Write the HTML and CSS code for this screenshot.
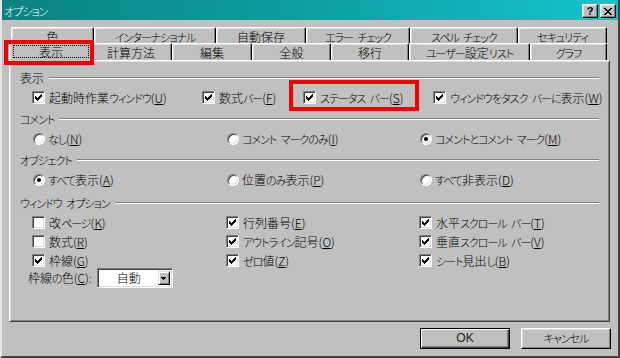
FILE: index.html
```html
<!DOCTYPE html>
<html lang="ja">
<head>
<meta charset="utf-8">
<title>オプション</title>
<link rel="stylesheet" href="styles.css">
</head>
<body>
<div class="window">
  <div class="titlebar">
    <span class="title"><span class="k">オプション</span></span>
    <div class="tb-buttons">
      <span class="tb-btn help">?</span>
      <span class="tb-btn close"><svg width="8" height="7" viewBox="0 0 8 7" shape-rendering="crispEdges"><path d="M0 0h2v1h1v1h2v-1h1v-1h2v1h-1v1h-1v1h-1v1h1v1h1v1h1v1h-2v-1h-1v-1h-2v1h-1v1h-2v-1h1v-1h1v-1h1v-1h-1v-1h-1v-1h-1z" fill="#000"/></svg></span>
    </div>
  </div>
  <div class="client">
    <div class="tabs">
      <div class="tabrow back">
        <div class="tab w83">色</div>
        <div class="tab w122"><span class="k">インターナショナル</span></div>
        <div class="tab w90">自動保存</div>
        <div class="tab w104"><span class="k">エラー チェック</span></div>
        <div class="tab w108"><span class="k">スペル チェック</span></div>
        <div class="tab w89"><span class="k">セキュリティ</span></div>
      </div>
      <div class="tabrow front">
        <div class="tab selected w79"><span class="focus">表示</span><span class="mark mark-tab"></span></div>
        <div class="tab w82">計算方法</div>
        <div class="tab w80">編集</div>
        <div class="tab w79">全般</div>
        <div class="tab w78">移行</div>
        <div class="tab w121"><span class="k">ユーザー</span>設定<span class="k">リスト</span></div>
        <div class="tab w77"><span class="k">グラフ</span></div>
      </div>
    </div>

    <div class="panel">
      <div class="group">
        <div class="ghead"><span class="glabel">表示</span><span class="gline"></span></div>
        <div class="grid grid-show">
          <label class="item"><span class="cb"><svg class="ck" width="7" height="7" viewBox="0 0 7 7" shape-rendering="crispEdges"><path d="M6 0h1v3h-1v1h-1v1h-1v1h-1v1h-1v-1h-1v-1h-1v-3h1v1h1v1h1v-1h1v-1h1v-1h1z" fill="#000"/></svg></span><span class="txt">起動時作業<span class="k">ウィンドウ</span>(<u>U</u>)</span></label>
          <label class="item"><span class="cb"><svg class="ck" width="7" height="7" viewBox="0 0 7 7" shape-rendering="crispEdges"><path d="M6 0h1v3h-1v1h-1v1h-1v1h-1v1h-1v-1h-1v-1h-1v-3h1v1h1v1h1v-1h1v-1h1v-1h1z" fill="#000"/></svg></span><span class="txt">数式<span class="k">バー</span>(<u>F</u>)</span></label>
          <label class="item"><span class="cb"><svg class="ck" width="7" height="7" viewBox="0 0 7 7" shape-rendering="crispEdges"><path d="M6 0h1v3h-1v1h-1v1h-1v1h-1v1h-1v-1h-1v-1h-1v-3h1v1h1v1h1v-1h1v-1h1v-1h1z" fill="#000"/></svg></span><span class="txt"><span class="k">ステータス バー</span>(<u>S</u>)</span><span class="mark mark-status"></span></label>
          <label class="item"><span class="cb"><svg class="ck" width="7" height="7" viewBox="0 0 7 7" shape-rendering="crispEdges"><path d="M6 0h1v3h-1v1h-1v1h-1v1h-1v1h-1v-1h-1v-1h-1v-3h1v1h1v1h1v-1h1v-1h1v-1h1z" fill="#000"/></svg></span><span class="txt"><span class="k">ウィンドウをタスク バーに</span>表示(<u>W</u>)</span></label>
        </div>
      </div>

      <div class="group">
        <div class="ghead"><span class="glabel"><span class="k">コメント</span></span><span class="gline"></span></div>
        <div class="grid grid-three">
          <label class="item"><span class="rb"></span><span class="txt"><span class="k">なし</span>(<u>N</u>)</span></label>
          <label class="item"><span class="rb"></span><span class="txt"><span class="k">コメント マークのみ</span>(<u>I</u>)</span></label>
          <label class="item"><span class="rb on"></span><span class="txt"><span class="k">コメントとコメント マーク</span>(<u>M</u>)</span></label>
        </div>
      </div>

      <div class="group">
        <div class="ghead"><span class="glabel"><span class="k">オブジェクト</span></span><span class="gline"></span></div>
        <div class="grid grid-three">
          <label class="item"><span class="rb on"></span><span class="txt"><span class="k">すべて</span>表示(<u>A</u>)</span></label>
          <label class="item"><span class="rb"></span><span class="txt">位置<span class="k">のみ</span>表示(<u>P</u>)</span></label>
          <label class="item"><span class="rb"></span><span class="txt"><span class="k">すべて</span>非表示(<u>D</u>)</span></label>
        </div>
      </div>

      <div class="group group-last">
        <div class="ghead"><span class="glabel"><span class="k">ウィンドウ オプション</span></span><span class="gline"></span></div>
        <div class="grid grid-three grid-opts">
          <label class="item"><span class="cb"></span><span class="txt">改<span class="k">ページ</span>(<u>K</u>)</span></label>
          <label class="item"><span class="cb"><svg class="ck" width="7" height="7" viewBox="0 0 7 7" shape-rendering="crispEdges"><path d="M6 0h1v3h-1v1h-1v1h-1v1h-1v1h-1v-1h-1v-1h-1v-3h1v1h1v1h1v-1h1v-1h1v-1h1z" fill="#000"/></svg></span><span class="txt">行列番号(<u>E</u>)</span></label>
          <label class="item"><span class="cb"><svg class="ck" width="7" height="7" viewBox="0 0 7 7" shape-rendering="crispEdges"><path d="M6 0h1v3h-1v1h-1v1h-1v1h-1v1h-1v-1h-1v-1h-1v-3h1v1h1v1h1v-1h1v-1h1v-1h1z" fill="#000"/></svg></span><span class="txt">水平<span class="k">スクロール バー</span>(<u>T</u>)</span></label>

          <label class="item"><span class="cb"></span><span class="txt">数式(<u>R</u>)</span></label>
          <label class="item"><span class="cb"><svg class="ck" width="7" height="7" viewBox="0 0 7 7" shape-rendering="crispEdges"><path d="M6 0h1v3h-1v1h-1v1h-1v1h-1v1h-1v-1h-1v-1h-1v-3h1v1h1v1h1v-1h1v-1h1v-1h1z" fill="#000"/></svg></span><span class="txt"><span class="k">アウトライン</span>記号(<u>O</u>)</span></label>
          <label class="item"><span class="cb"><svg class="ck" width="7" height="7" viewBox="0 0 7 7" shape-rendering="crispEdges"><path d="M6 0h1v3h-1v1h-1v1h-1v1h-1v1h-1v-1h-1v-1h-1v-3h1v1h1v1h1v-1h1v-1h1v-1h1z" fill="#000"/></svg></span><span class="txt">垂直<span class="k">スクロール バー</span>(<u>V</u>)</span></label>

          <label class="item"><span class="cb"><svg class="ck" width="7" height="7" viewBox="0 0 7 7" shape-rendering="crispEdges"><path d="M6 0h1v3h-1v1h-1v1h-1v1h-1v1h-1v-1h-1v-1h-1v-3h1v1h1v1h1v-1h1v-1h1v-1h1z" fill="#000"/></svg></span><span class="txt">枠線(<u>G</u>)</span></label>
          <label class="item"><span class="cb"><svg class="ck" width="7" height="7" viewBox="0 0 7 7" shape-rendering="crispEdges"><path d="M6 0h1v3h-1v1h-1v1h-1v1h-1v1h-1v-1h-1v-1h-1v-3h1v1h1v1h1v-1h1v-1h1v-1h1z" fill="#000"/></svg></span><span class="txt"><span class="k">ゼロ</span>値(<u>Z</u>)</span></label>
          <label class="item"><span class="cb"><svg class="ck" width="7" height="7" viewBox="0 0 7 7" shape-rendering="crispEdges"><path d="M6 0h1v3h-1v1h-1v1h-1v1h-1v1h-1v-1h-1v-1h-1v-3h1v1h1v1h1v-1h1v-1h1v-1h1z" fill="#000"/></svg></span><span class="txt"><span class="k">シート</span>見出<span class="k">し</span>(<u>B</u>)</span></label>
        </div>
        <div class="colorrow">
          <span class="txt">枠線<span class="k">の</span>色(<u>C</u>):</span>
          <span class="combo"><span class="combo-val">自動</span><span class="combo-btn"><svg width="5" height="3" viewBox="0 0 5 3" shape-rendering="crispEdges"><path d="M0 0h5v1h-1v1h-1v1h-1v-1h-1v-1h-1z" fill="#000"/></svg></span></span>
        </div>
      </div>
    </div>

    <div class="buttons">
      <span class="btn default">OK</span>
      <span class="btn"><span class="k">キャンセル</span></span>
    </div>
  </div>
</div>
</body>
</html>
```

FILE: styles.css
```css
* { box-sizing: border-box; }
html, body { margin: 0; padding: 0; }
body {
  width: 620px;
  height: 358px;
  overflow: hidden;
  background: #c0c0c0;
  font-family: "Noto Sans CJK JP", "Liberation Sans", sans-serif;
  font-size: 12px;
  font-weight: 300;
  line-height: 13px;
  color: #000;
  font-feature-settings: "palt";
}
u { text-decoration: underline; text-underline-offset: 1px; text-decoration-thickness: 1px; }
.k { font-size: 11px; letter-spacing: -1px; word-spacing: 3px; }

.window {
  width: 620px;
  height: 358px;
  background: #c0c0c0;
  border-left: 2px solid #e6e6e6;
  border-right: 2px solid #404040;
  border-bottom: 2px solid #404040;
  display: flex;
  flex-direction: column;
}

/* title bar */
.titlebar {
  height: 20px;
  flex: none;
  display: flex;
  align-items: center;
  justify-content: space-between;
  padding: 0 2px 0 2px;
  background: linear-gradient(to right, #0a8282, #0c9c9e 45%, #14c4cc);
}
.title { color: #fff; font-size: 12px; line-height: 13px; padding-top: 1px; }
.tb-buttons { display: flex; gap: 2px; padding-top: 2px; }
.tb-btn {
  width: 16px;
  height: 14px;
  background: #c0c0c0;
  border: 1px solid;
  border-color: #fff #000 #000 #fff;
  box-shadow: inset -1px -1px #808080, inset 1px 1px #dfdfdf;
  display: flex;
  align-items: center;
  justify-content: center;
}
.help { font-family: "Liberation Sans", sans-serif; font-weight: bold; font-size: 11px; line-height: 11px; }

/* client area */
.client {
  flex: 1;
  display: flex;
  flex-direction: column;
  padding: 7px 8px 0 7px;
}

/* tabs */
.tabs { display: flex; flex-direction: column; }
.tabrow { display: flex; margin-left: 2px; align-items: flex-start; }
.tabrow.back { height: 16px; }
.tabrow.front { height: 19px; margin-bottom: -2px; }
.tab {
  flex: none;
  background: #c0c0c0;
  border-top: 1px solid #fff;
  border-left: 1px solid #fff;
  border-right: 1px solid #000;
  border-radius: 2px 2px 0 0;
  box-shadow: inset -1px 0 #808080, inset 1px 1px #dfdfdf;
  text-align: center;
  white-space: nowrap;
}
.back .tab { height: 16px; padding-top: 2px; }
.front .tab { height: 17px; padding-top: 2px; }
.front .tab.selected {
  position: relative;
  z-index: 1;
  height: 21px;
  margin: -2px -2px 0 -2px;
  padding: 3px 2px 0 2px;
}
.focus {
  display: block;
  border: 1px dotted #000;
  height: 13px;
  line-height: 11px;
  margin: 0 0 0 1px;
}

.w77 { width: 77px; }
.w78 { width: 78px; }
.w79 { width: 79px; }
.w80 { width: 80px; }
.w82 { width: 82px; }
.w83 { width: 83px; }
.w89 { width: 89px; }
.w90 { width: 90px; }
.w104 { width: 104px; }
.w108 { width: 108px; }
.w121 { width: 121px; }
.w122 { width: 122px; }
.selected.w79 { width: 83px; }

/* red highlight frames */
.mark {
  position: absolute;
  border: 4px solid #f20000;
  pointer-events: none;
}
.mark-tab { left: -6px; top: -2px; width: 90px; height: 25px; }
.mark-status { left: -14px; top: -11px; width: 130px; height: 31px; }

/* panel */
.panel {
  height: 262px;
  flex: none;
  border: 1px solid;
  border-color: #fff #404040 #404040 #fff;
  box-shadow: inset 1px 1px #dfdfdf, inset -1px -1px #808080;
  padding: 10px 10px 0 10px;
}
.group + .group { margin-top: 8px; }
.group-last { margin-top: 10px !important; }
.ghead { display: flex; align-items: center; height: 13px; margin-bottom: 7px; }
.glabel { white-space: nowrap; }
.gline {
  flex: 1;
  height: 2px;
  margin-left: 5px;
  margin-top: 1px;
  border-top: 1px solid #808080;
  border-bottom: 1px solid #fff;
}

.grid { display: grid; padding-left: 12px; }
.grid-show { grid-template-columns: 170px 101px 130px 1fr; }
.grid-three { grid-template-columns: 194px 193px 1fr; }
.grid-opts { row-gap: 6px; }

.item {
  position: relative;
  display: flex;
  align-items: center;
  height: 13px;
  gap: 4px;
  white-space: nowrap;
}
.txt { white-space: nowrap; }

.cb {
  flex: none;
  width: 13px;
  height: 13px;
  background: #fff;
  border: 1px solid;
  border-color: #808080 #fff #fff #808080;
  box-shadow: inset 1px 1px #404040, inset -1px -1px #dfdfdf;
  display: flex;
  align-items: center;
  justify-content: center;
}
.ck { display: block; }

.rb {
  flex: none;
  width: 12px;
  height: 12px;
  margin-left: 1px;
  margin-right: -1px;
  border-radius: 50%;
  background: #fff;
  border: 1px solid;
  border-color: #808080 #fff #fff #808080;
  box-shadow: inset 1px 1px #404040, inset -1px -1px #dfdfdf;
  display: flex;
  align-items: center;
  justify-content: center;
}
.rb.on::after {
  content: "";
  width: 4px;
  height: 4px;
  border-radius: 50%;
  background: #000;
}

/* border colour row */
.colorrow {
  display: flex;
  align-items: center;
  gap: 5px;
  margin-top: 1px;
  padding-left: 8px;
  height: 20px;
}
.combo {
  width: 76px;
  height: 20px;
  display: flex;
  background: #fff;
  border: 1px solid;
  border-color: #808080 #fff #fff #808080;
  box-shadow: inset 1px 1px #404040, inset -1px -1px #dfdfdf;
  padding: 2px;
}
.combo-val { flex: 1; text-align: center; line-height: 14px; }
.combo-btn {
  width: 12px;
  height: 14px;
  background: #c0c0c0;
  border: 1px solid;
  border-color: #dfdfdf #000 #000 #dfdfdf;
  box-shadow: inset 1px 1px #fff, inset -1px -1px #808080;
  display: flex;
  align-items: center;
  justify-content: center;
}
.combo-btn svg { display: block; }

/* buttons */
.buttons {
  display: flex;
  justify-content: flex-end;
  gap: 11px;
  margin-top: 6px;
  margin-right: -1px;
}
.btn {
  width: 90px;
  height: 21px;
  display: flex;
  align-items: center;
  justify-content: center;
  background: #c0c0c0;
  border: 1px solid;
  border-color: #fff #000 #000 #fff;
  box-shadow: inset -1px -1px #808080, inset 1px 1px #dfdfdf;
}
.btn.default {
  border-color: #000;
  box-shadow: inset 1px 1px #fff, inset -1px -1px #404040, inset -2px -2px #808080;
  font-family: "Liberation Sans", sans-serif;
  font-size: 12px;
  font-weight: 400;
  color: #222;
}
```
